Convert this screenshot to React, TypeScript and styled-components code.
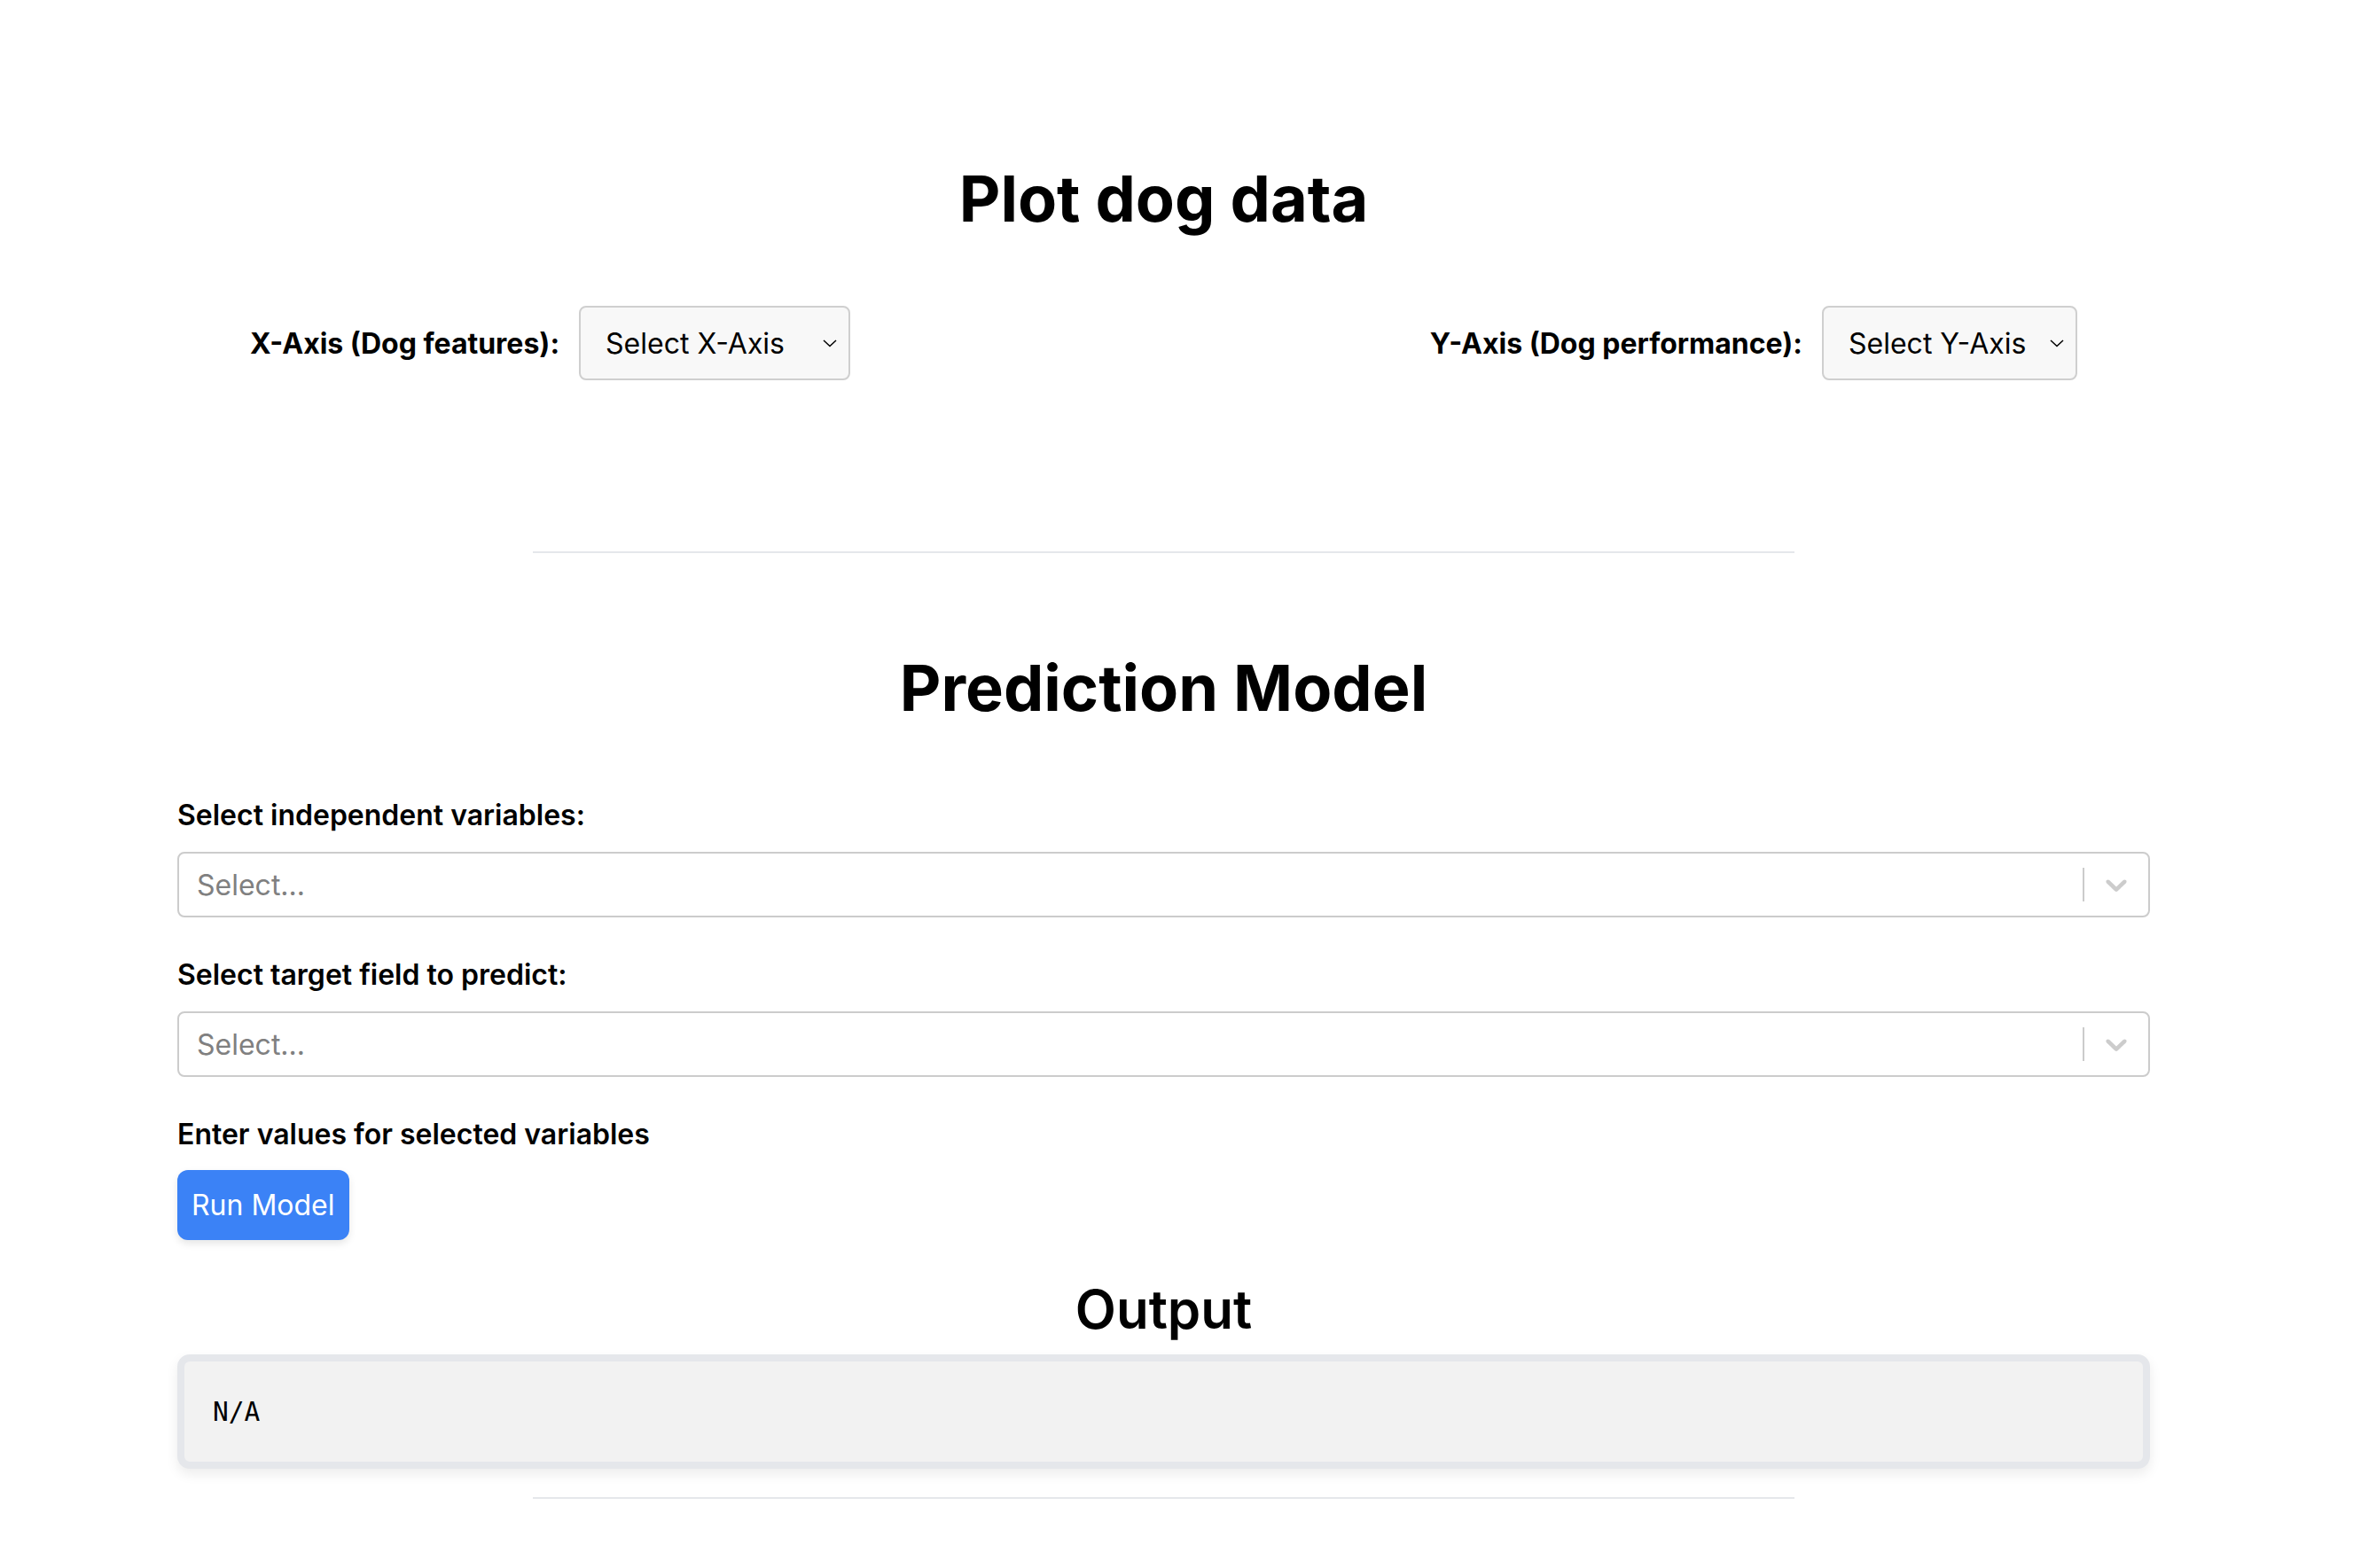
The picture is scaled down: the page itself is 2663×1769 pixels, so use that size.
import React from "react";
import styled, { createGlobalStyle } from "styled-components";

const Global = createGlobalStyle`
  html, body { margin: 0; padding: 0; background: #ffffff; }
  body { font-family: Inter, "Noto Sans", "Liberation Sans", sans-serif; color: #000; }
  * { box-sizing: border-box; }
`;

const Page = styled.div`
  width: 2625px;
  display: flex;
  flex-direction: column;
`;

const PlotSection = styled.section`
  display: flex;
  flex-direction: column;
  padding-top: 180px;
`;

const Title = styled.h1`
  margin: 0;
  font-size: 72px;
  line-height: 87px;
  font-weight: 700;
  text-align: center;
`;

const AxisRow = styled.div`
  display: flex;
  justify-content: space-between;
  align-items: center;
  padding: 0 282px;
  margin-top: 78px;
`;

const AxisGroup = styled.div`
  display: flex;
  align-items: center;
  gap: 22px;
`;

const AxisLabel = styled.label`
  font-size: 32px;
  font-weight: 700;
`;

const NativeSelect = styled.div<{ $w: number }>`
  width: ${(p) => p.$w}px;
  height: 84px;
  display: flex;
  align-items: center;
  justify-content: space-between;
  padding: 0 12px 0 28px;
  background: #f8f8f8;
  border: 2px solid #cfcfcf;
  border-radius: 8px;
  font-size: 32px;
  color: #000;
`;

const Divider = styled.hr`
  width: 1423px;
  margin: 0 auto;
  border: none;
  border-top: 2px solid #e5e7eb;
`;

const Spacer = styled.div<{ $h: number }>`
  height: ${(p) => p.$h}px;
`;

const ModelSection = styled.section`
  display: flex;
  flex-direction: column;
  padding: 0 200px;
`;

const FieldLabel = styled.div<{ $top: number }>`
  margin-top: ${(p) => p.$top}px;
  font-size: 32px;
  line-height: 44px;
  font-weight: 600;
`;

const Control = styled.div`
  margin-top: 19px;
  height: 74px;
  display: flex;
  align-items: center;
  border: 2px solid #cccccc;
  border-radius: 8px;
  background: #fff;
`;

const Placeholder = styled.div`
  flex: 1;
  padding-left: 20px;
  font-size: 32px;
  color: #808080;
`;

const Separator = styled.span`
  width: 2px;
  align-self: stretch;
  margin: 16px 0;
  background: #cccccc;
`;

const Indicator = styled.div`
  padding: 16px;
  display: flex;
  align-items: center;
  svg { display: block; }
`;

const RunButton = styled.button`
  margin-top: 18px;
  align-self: flex-start;
  height: 79px;
  padding: 0 16px;
  font-family: inherit;
  font-size: 32px;
  color: #fff;
  background: #3b82f6;
  border: none;
  border-radius: 12px;
  box-shadow: 0 4px 8px rgba(0, 0, 0, 0.1);
`;

const OutputTitle = styled.h2`
  margin: 44px 0 0;
  font-size: 60px;
  line-height: 68px;
  font-weight: 600;
  text-align: center;
`;

const OutputBox = styled.pre`
  margin: 17px 0 0;
  height: 129px;
  display: flex;
  align-items: center;
  padding: 0 32px;
  background: #f2f2f2;
  border: 8px solid #e5e7eb;
  border-radius: 14px;
  box-shadow: 0 6px 14px rgba(0, 0, 0, 0.08);
  font-family: "DejaVu Sans Mono", "Liberation Mono", monospace;
  font-size: 29.5px;
  color: #000;
`;

const Chevron = () => (
  <svg width="18" height="10" viewBox="0 0 18 10">
    <path d="M2 2 L9 8.5 L16 2" fill="none" stroke="#000" strokeWidth="1.5" />
  </svg>
);

const DropIcon = () => (
  <svg width="40" height="40" viewBox="0 0 20 20" fill="#cccccc">
    <path d="M4.516 7.548c0.436-0.446 1.043-0.481 1.576 0l3.908 3.747 3.908-3.747c0.533-0.481 1.141-0.446 1.574 0 0.436 0.445 0.408 1.197 0 1.615-0.406 0.418-4.695 4.502-4.695 4.502-0.217 0.223-0.502 0.335-0.787 0.335s-0.57-0.112-0.789-0.335c0 0-4.287-4.084-4.695-4.502s-0.436-1.17 0-1.615z" />
  </svg>
);

const ReactSelect = () => (
  <Control>
    <Placeholder>Select...</Placeholder>
    <Separator />
    <Indicator>
      <DropIcon />
    </Indicator>
  </Control>
);

export default function App() {
  return (
    <Page>
      <Global />
      <PlotSection>
        <Title>Plot dog data</Title>
        <AxisRow>
          <AxisGroup>
            <AxisLabel>X-Axis (Dog features):</AxisLabel>
            <NativeSelect $w={306}>
              <span>Select X-Axis</span>
              <Chevron />
            </NativeSelect>
          </AxisGroup>
          <AxisGroup>
            <AxisLabel>Y-Axis (Dog performance):</AxisLabel>
            <NativeSelect $w={288}>
              <span>Select Y-Axis</span>
              <Chevron />
            </NativeSelect>
          </AxisGroup>
        </AxisRow>
      </PlotSection>
      <Spacer $h={193} />
      <Divider />
      <Spacer $h={108} />
      <Title>Prediction Model</Title>
      <ModelSection>
        <FieldLabel $top={79}>Select independent variables:</FieldLabel>
        <ReactSelect />
        <FieldLabel $top={43}>Select target field to predict:</FieldLabel>
        <ReactSelect />
        <FieldLabel $top={43}>Enter values for selected variables</FieldLabel>
        <RunButton>Run Model</RunButton>
        <OutputTitle>Output</OutputTitle>
        <OutputBox>N/A</OutputBox>
      </ModelSection>
      <Spacer $h={32} />
      <Divider />
    </Page>
  );
}
